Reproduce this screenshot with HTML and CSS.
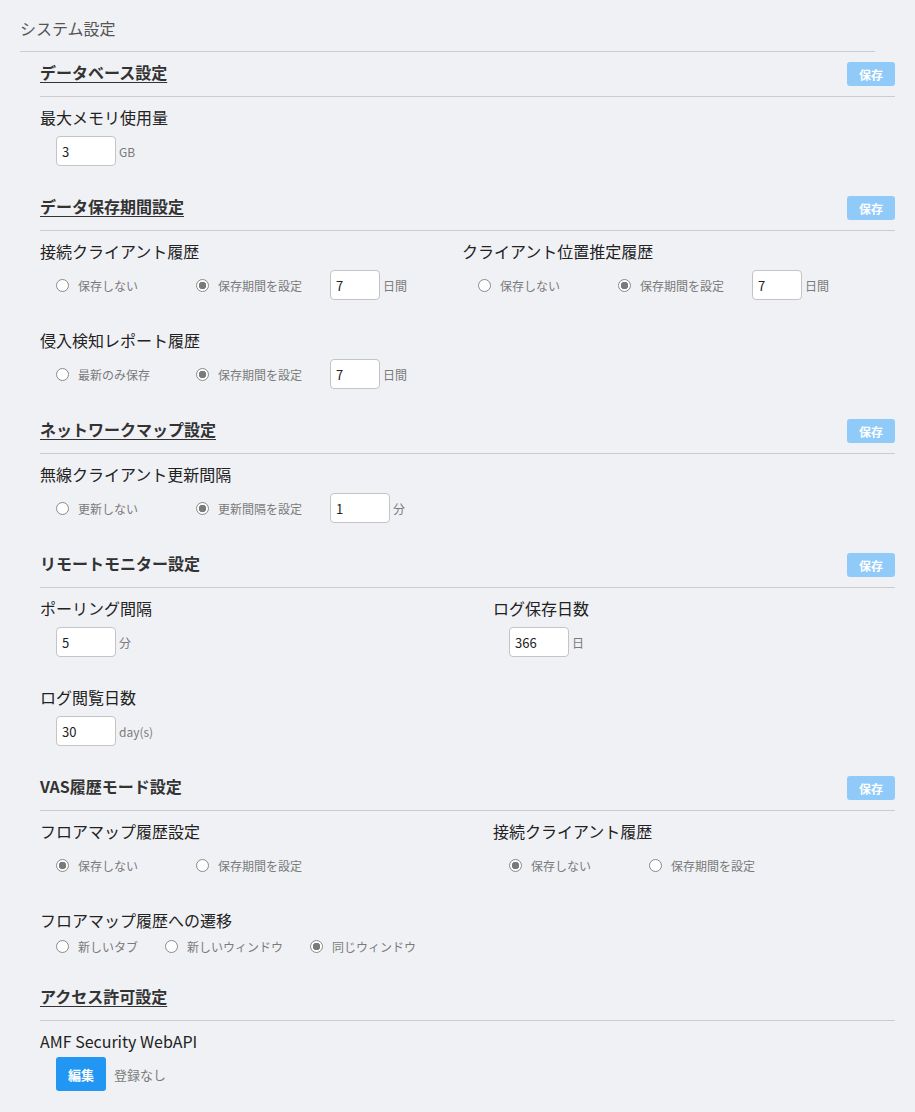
FILE: index.html
```html
<!DOCTYPE html>
<html lang="ja">
  <head>
    <meta charset="UTF-8" />
    <meta name="viewport" content="width=device-width, initial-scale=1.0" />
    <title>システム設定</title>
    <link rel="stylesheet" href="styles.css">
  </head>
  <body>
    <div class="page">
      <h1 class="page-title">システム設定</h1>

      <!-- データベース -->
      <section class="panel">
        <div class="panel-head">
          <a class="panel-title link" href="#">データベース設定</a>
          <button class="btn-save">保存</button>
        </div>
        <div class="field">
          <div class="field-label">最大メモリ使用量</div>
          <div class="field-row">
            <input class="num num-wide" type="text" value="3" />
            <span class="unit">GB</span>
          </div>
        </div>
      </section>

      <!-- データ保存期間 -->
      <section class="panel">
        <div class="panel-head">
          <a class="panel-title link" href="#">データ保存期間設定</a>
          <button class="btn-save">保存</button>
        </div>
        <div class="cols cols-retention">
          <div class="field">
            <div class="field-label">接続クライアント履歴</div>
            <div class="field-row">
              <label class="opt opt-fixed"><input type="radio" name="client" />保存しない</label>
              <label class="opt opt-gap"><input type="radio" name="client" checked />保存期間を設定</label>
              <input class="num" type="text" value="7" />
              <span class="unit">日間</span>
            </div>
          </div>
          <div class="field">
            <div class="field-label">クライアント位置推定履歴</div>
            <div class="field-row">
              <label class="opt opt-fixed"><input type="radio" name="locate" />保存しない</label>
              <label class="opt opt-gap"><input type="radio" name="locate" checked />保存期間を設定</label>
              <input class="num" type="text" value="7" />
              <span class="unit">日間</span>
            </div>
          </div>
        </div>
        <div class="field">
          <div class="field-label">侵入検知レポート履歴</div>
          <div class="field-row">
            <label class="opt opt-fixed"><input type="radio" name="ids" />最新のみ保存</label>
            <label class="opt opt-gap"><input type="radio" name="ids" checked />保存期間を設定</label>
            <input class="num" type="text" value="7" />
            <span class="unit">日間</span>
          </div>
        </div>
      </section>

      <!-- ネットワークマップ -->
      <section class="panel">
        <div class="panel-head">
          <a class="panel-title link" href="#">ネットワークマップ設定</a>
          <button class="btn-save">保存</button>
        </div>
        <div class="field">
          <div class="field-label">無線クライアント更新間隔</div>
          <div class="field-row">
            <label class="opt opt-fixed"><input type="radio" name="wifi" />更新しない</label>
            <label class="opt opt-gap"><input type="radio" name="wifi" checked />更新間隔を設定</label>
            <input class="num num-wide" type="text" value="1" />
            <span class="unit">分</span>
          </div>
        </div>
      </section>

      <!-- リモートモニター -->
      <section class="panel">
        <div class="panel-head">
          <span class="panel-title">リモートモニター設定</span>
          <button class="btn-save">保存</button>
        </div>
        <div class="cols cols-wide">
          <div class="field">
            <div class="field-label">ポーリング間隔</div>
            <div class="field-row">
              <input class="num num-wide" type="text" value="5" />
              <span class="unit">分</span>
            </div>
          </div>
          <div class="field">
            <div class="field-label">ログ保存日数</div>
            <div class="field-row">
              <input class="num num-wide" type="text" value="366" />
              <span class="unit">日</span>
            </div>
          </div>
        </div>
        <div class="field">
          <div class="field-label">ログ閲覧日数</div>
          <div class="field-row">
            <input class="num num-wide" type="text" value="30" />
            <span class="unit">day(s)</span>
          </div>
        </div>
      </section>

      <!-- VAS履歴モード -->
      <section class="panel">
        <div class="panel-head">
          <span class="panel-title">VAS履歴モード設定</span>
          <button class="btn-save">保存</button>
        </div>
        <div class="cols cols-wide">
          <div class="field">
            <div class="field-label">フロアマップ履歴設定</div>
            <div class="field-row">
              <label class="opt opt-fixed"><input type="radio" name="floor" checked />保存しない</label>
              <label class="opt"><input type="radio" name="floor" />保存期間を設定</label>
            </div>
          </div>
          <div class="field">
            <div class="field-label">接続クライアント履歴</div>
            <div class="field-row">
              <label class="opt opt-fixed"><input type="radio" name="vasclient" checked />保存しない</label>
              <label class="opt"><input type="radio" name="vasclient" />保存期間を設定</label>
            </div>
          </div>
        </div>
        <div class="field">
          <div class="field-label">フロアマップ履歴への遷移</div>
          <div class="field-row field-row-tight">
            <label class="opt opt-inline"><input type="radio" name="jump" />新しいタブ</label>
            <label class="opt opt-inline"><input type="radio" name="jump" />新しいウィンドウ</label>
            <label class="opt opt-inline"><input type="radio" name="jump" checked />同じウィンドウ</label>
          </div>
        </div>
      </section>

      <!-- アクセス許可 -->
      <section class="panel">
        <div class="panel-head">
          <a class="panel-title link" href="#">アクセス許可設定</a>
        </div>
        <div class="field">
          <div class="field-label">AMF Security WebAPI</div>
          <div class="field-row field-row-btn">
            <button class="btn-edit">編集</button>
            <span class="note">登録なし</span>
          </div>
        </div>
      </section>
    </div>
  </body>
</html>
```

FILE: styles.css
```css
:root {
  --bg-color: #f0f1f5;
  --text-color: #222222;
  --muted-color: #7a7a7a;
  --line-color: #cccccc;
  --save-color: #90caf9;
  --primary-color: #2196f3;
}

* {
  margin: 0;
  padding: 0;
  box-sizing: border-box;
  font-family: 'Noto Sans CJK JP', 'Noto Sans', sans-serif;
}

body {
  background-color: var(--bg-color);
  color: var(--text-color);
}

.page {
  padding: 0 20px;
}

.page-title {
  margin-right: 20px;
  padding: 16px 0 11px;
  font-size: 16px;
  line-height: 24px;
  font-weight: 400;
  color: #555;
  border-bottom: 1px solid var(--line-color);
  margin-bottom: 10px;
}

.panel {
  margin-left: 20px;
}

.panel-head {
  display: flex;
  align-items: center;
  justify-content: space-between;
  min-height: 35px;
  padding-bottom: 10px;
  border-bottom: 1px solid var(--line-color);
  margin-bottom: 10px;
}

.panel-title {
  padding-bottom: 3px;
  font-size: 16px;
  line-height: 21px;
  font-weight: 700;
  color: #333;
}

.panel-title.link {
  text-decoration: underline;
  text-underline-offset: 3px;
  text-decoration-thickness: 1px;
}

.btn-save {
  width: 48px;
  height: 24px;
  border: none;
  border-radius: 3px;
  background-color: var(--save-color);
  color: white;
  font-size: 12px;
  font-weight: 700;
  cursor: pointer;
}

.cols {
  display: grid;
}

.cols-retention {
  grid-template-columns: 422px 1fr;
}

.cols-wide {
  grid-template-columns: 453px 1fr;
}

.field {
  margin-bottom: 30px;
}

.field-label {
  padding-bottom: 1px;
  font-size: 16px;
  line-height: 21px;
  color: var(--text-color);
}

.field-row {
  display: flex;
  align-items: center;
  height: 30px;
  margin-top: 7px;
  padding-left: 16px;
}

.field-row-tight {
  height: 20px;
  margin-top: 4px;
}

.field-row-btn {
  height: 34px;
  margin-top: 4px;
}

.opt {
  display: inline-flex;
  align-items: center;
  font-size: 12px;
  color: var(--muted-color);
  white-space: nowrap;
}

.opt-fixed {
  width: 140px;
}

.opt-gap {
  margin-right: 28px;
}

.opt-inline {
  margin-right: 27px;
}

.opt input[type='radio'] {
  appearance: none;
  width: 13px;
  height: 13px;
  margin-right: 9px;
  border: 1px solid #8a8a8a;
  border-radius: 50%;
  background-color: white;
  flex-shrink: 0;
}

.opt input[type='radio']:checked {
  background: radial-gradient(circle, #7a7a7a 0 3.5px, white 4px);
}

.num {
  width: 50px;
  height: 30px;
  padding: 0 5px;
  border: 1px solid #c4c4c4;
  border-radius: 4px;
  background-color: white;
  font-size: 13px;
  color: var(--text-color);
}

.num-wide {
  width: 60px;
}

.unit {
  margin-left: 3px;
  font-size: 12px;
  color: var(--muted-color);
}

.btn-edit {
  width: 50px;
  height: 34px;
  border: none;
  border-radius: 3px;
  background-color: var(--primary-color);
  color: white;
  font-size: 13px;
  font-weight: 700;
  cursor: pointer;
}

.note {
  margin-left: 8px;
  font-size: 13px;
  color: var(--muted-color);
}
```
